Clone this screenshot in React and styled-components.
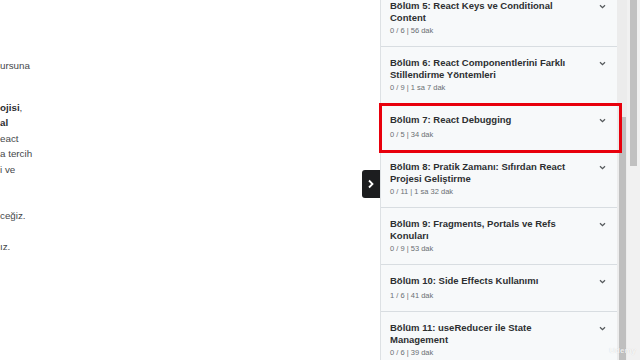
import React from "react"
import styled, { createGlobalStyle } from "styled-components"

const sections = [
  { title: "Bölüm 5: React Keys ve Conditional Content", meta: "0 / 6 | 56 dak" },
  { title: "Bölüm 6: React Componentlerini Farklı Stillendirme Yöntemleri", meta: "0 / 9 | 1 sa 7 dak" },
  { title: "Bölüm 7: React Debugging", meta: "0 / 5 | 34 dak", active: true },
  { title: "Bölüm 8: Pratik Zamanı: Sıfırdan React Projesi Geliştirme", meta: "0 / 11 | 1 sa 32 dak" },
  { title: "Bölüm 9: Fragments, Portals ve Refs Konuları", meta: "0 / 9 | 53 dak" },
  { title: "Bölüm 10: Side Effects Kullanımı", meta: "1 / 6 | 41 dak" },
  { title: "Bölüm 11: useReducer ile State Management", meta: "0 / 6 | 39 dak" },
]

export default function App() {
  return (
    <>
      <GlobalStyle />
      <Page>
        <Main>
          <Paragraph top={58}>ursuna</Paragraph>
          <Paragraph top={26}>
            <b>ojisi</b>,<br />
            <b>al</b>
            <br />
            eact
            <br />a tercih
            <br />i ve
          </Paragraph>
          <Paragraph top={31}>ceğiz.</Paragraph>
          <Paragraph top={15}>ız.</Paragraph>
          <Toggle>
            <svg width="8" height="10" viewBox="0 0 8 10">
              <path d="M2 1.5 L5.5 5 L2 8.5" fill="none" stroke="#fff" strokeWidth="1.8" />
            </svg>
          </Toggle>
        </Main>
        <Sidebar>
          <List>
            {sections.map((s) => (
              <Item key={s.title} active={s.active}>
                <ItemText>
                  <Title>{s.title}</Title>
                  <Meta>{s.meta}</Meta>
                </ItemText>
                <Chevron width="7" height="5" viewBox="0 0 7 5">
                  <path d="M1 1.2 L3.5 3.7 L6 1.2" fill="none" stroke="#55595c" strokeWidth="1.3" />
                </Chevron>
              </Item>
            ))}
          </List>
        </Sidebar>
        <InnerScroll>
          <Thumb top={117} />
        </InnerScroll>
        <PageScroll>
          <PageThumb />
        </PageScroll>
        <Watermark>Udemy</Watermark>
      </Page>
    </>
  )
}

const GlobalStyle = createGlobalStyle`
  html, body {
    margin: 0;
    padding: 0;
    overflow: hidden;
  }
  body {
    font-family: "Liberation Sans", Arial, sans-serif;
  }
`

const Page = styled.div`
  position: relative;
  display: flex;
  width: 640px;
  height: 360px;
  overflow: hidden;
  background: #fff;
`

const Main = styled.div`
  position: relative;
  width: 380px;
  flex-shrink: 0;
  background: #fff;
`

const Paragraph = styled.p`
  margin: ${(p) => p.top}px 0 0 0;
  font-size: 9.8px;
  line-height: 15.5px;
  color: #45484b;
  b {
    color: #2d2f31;
  }
`

const Toggle = styled.div`
  position: absolute;
  right: 0;
  top: 170px;
  width: 18px;
  height: 28px;
  border-radius: 3px 0 0 3px;
  background: #1c1d1f;
  display: flex;
  align-items: center;
  justify-content: center;
`

const Sidebar = styled.div`
  width: 236px;
  flex-shrink: 0;
  background: #f7f9fa;
  border-left: 1px solid #dde1e4;
`

const List = styled.div`
  margin-top: -10px;
`

const Item = styled.div`
  position: relative;
  z-index: 1;
  display: flex;
  align-items: flex-start;
  padding: 10px 11px 10px 9px;
  border-bottom: 1px solid #d8dde1;
  ${(p) =>
    p.active &&
    `
    &::after {
      content: "";
      position: absolute;
      top: -1px;
      left: -2px;
      right: -5px;
      bottom: -3px;
      border: 3.5px solid #e8000c;
      z-index: 3;
    }
  `}
`

const ItemText = styled.div`
  flex: 1;
  padding-right: 22px;
`

const Title = styled.div`
  font-size: 9.5px;
  line-height: 12px;
  min-height: 14px;
  font-weight: bold;
  color: #2d2f31;
`

const Meta = styled.div`
  margin-top: 2px;
  font-size: 7.5px;
  line-height: 10px;
  color: #6a6f73;
`

const Chevron = styled.svg`
  margin-top: 4px;
  flex-shrink: 0;
`

const InnerScroll = styled.div`
  position: relative;
  width: 10px;
  flex-shrink: 0;
  background: #ececec;
`

const Thumb = styled.div`
  position: absolute;
  left: 2px;
  right: 1px;
  top: ${(p) => p.top}px;
  bottom: 0;
  background: #bfbfbf;
`

const PageScroll = styled.div`
  position: relative;
  flex: 1;
  background: #f1f1f1;
`

const PageThumb = styled.div`
  position: absolute;
  left: 3px;
  right: 3px;
  top: 0;
  height: 166px;
  background: #c1c1c1;
`

const Watermark = styled.div`
  position: absolute;
  right: 4px;
  bottom: 5px;
  font-size: 8px;
  font-weight: bold;
  color: rgba(255, 255, 255, 0.8);
  text-shadow: 0 0 1px rgba(0, 0, 0, 0.15);
`
